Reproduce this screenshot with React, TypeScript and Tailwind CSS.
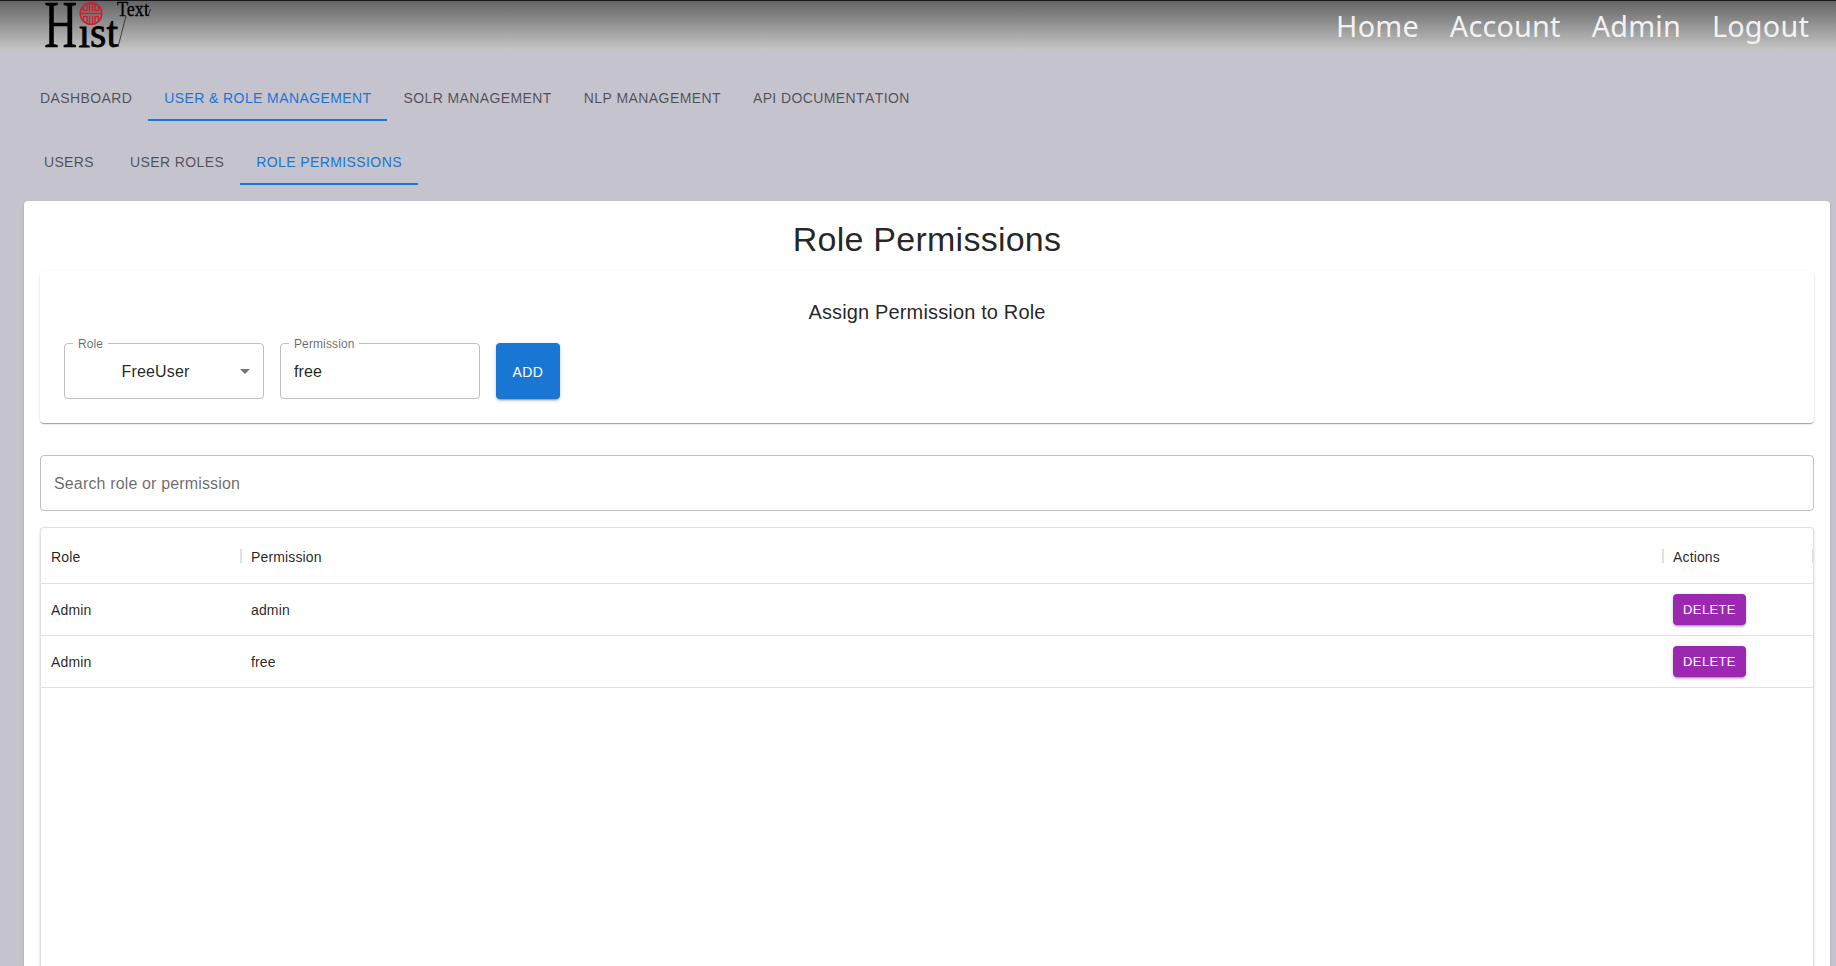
import React from "react";

const shadow2 =
  "shadow-[0px_3px_1px_-2px_rgba(0,0,0,0.2),0px_2px_2px_0px_rgba(0,0,0,0.14),0px_1px_5px_0px_rgba(0,0,0,0.12)]";
const shadow1 =
  "shadow-[0px_2px_1px_-1px_rgba(0,0,0,0.2),0px_1px_1px_0px_rgba(0,0,0,0.14),0px_1px_3px_0px_rgba(0,0,0,0.12)]";

function Logo() {
  return (
    <svg
      width="114"
      height="48"
      viewBox="0 0 114 48"
      className="block overflow-visible"
      fontFamily="'Liberation Serif', serif"
    >
      <g transform="translate(5 46) scale(0.67 1)">
        <text x="-1" y="0" fontSize="68" stroke="#000" strokeWidth="0.6">H</text>
      </g>
      <g transform="translate(38.5 46) scale(0.93 1)">
        <text x="0" y="0" fontSize="45" stroke="#000" strokeWidth="0.8">ıst</text>
      </g>
      <text x="77" y="15" fontSize="20" textLength="32" lengthAdjust="spacingAndGlyphs" stroke="#000" strokeWidth="0.3">
        Text
      </text>
      <path d="M86 15 78 46M110.500 8l-2 6" stroke="#222" strokeWidth="0.8" fill="none" />
      <g transform="translate(51 12.5)" fill="none" stroke="#c8202f" strokeWidth="1.5">
        <circle r="10.8" />
        <path d="M-1.500-11V-2M1.500-11V-2M-1.500 11V2M1.500 11V2M-11 0H11M-7.500-7.500V-3H-4V-9M7.500-7.500V-3H4V-9M-7.500 7.500V3H-4V9M7.500 7.500V3H4V9" />
      </g>
    </svg>
  );
}

function Tab({ label, active = false }: { label: string; active?: boolean }) {
  return (
    <button
      className={
        "flex h-12 min-w-[90px] items-center justify-center border-b-2 px-4 pt-1 text-sm leading-[18px] tracking-[0.02857em] uppercase [font-kerning:none] " +
        (active ? "border-[#1976d2] text-[#1976d2]" : "border-transparent text-black/60")
      }
    >
      {label}
    </button>
  );
}

function Outlined({ label, children }: { label: string; children: React.ReactNode }) {
  return (
    <div className="relative flex h-14 w-[200px] items-center rounded border border-black/25 px-[13px]">
      <span className="absolute -top-2 left-2 bg-white px-[5px] text-xs leading-[17px] tracking-[0.0094em] text-black/60">
        {label}
      </span>
      {children}
    </div>
  );
}

const rows = [
  { role: "Admin", permission: "admin" },
  { role: "Admin", permission: "free" },
];

export default function App() {
  return (
    <div className="flex h-[966px] flex-col overflow-hidden bg-[#c5c3ce] font-['Liberation_Sans',Arial,sans-serif] text-black/87">
      <header className="flex h-[49px] shrink-0 justify-between border-t border-[#1c1b1f] bg-linear-to-b from-[#666] to-[#c4c4c4] pl-10">
        <Logo />
        <nav className="flex gap-[31px] pr-[27px] font-['Noto_Sans',sans-serif] text-[28.8px] leading-[50px] tracking-[0.2px] text-[#f2f2f2]">
          <a>Home</a>
          <a>Account</a>
          <a>Admin</a>
          <a>Logout</a>
        </nav>
      </header>
      <main className="flex min-h-0 flex-1 flex-col pt-6 pr-1.5 pl-6">
        <div className="flex shrink-0">
          <Tab label="Dashboard" />
          <Tab label="User & Role Management" active />
          <Tab label="Solr Management" />
          <Tab label="NLP Management" />
          <Tab label="API Documentation" />
        </div>
        <div className="mt-4 flex shrink-0">
          <Tab label="Users" />
          <Tab label="User Roles" />
          <Tab label="Role Permissions" active />
        </div>
        <section className={"mt-4 flex min-h-0 flex-1 flex-col rounded-t bg-white px-4 pt-[17px] " + shadow1}>
          <h4 className="mb-[11px] text-center text-[34px] leading-[42px] tracking-[0.00735em]">Role Permissions</h4>
          <div className={"h-[152px] rounded px-6 pt-[25px] " + shadow1}>
            <h6 className="mb-[15px] text-center text-xl leading-8 tracking-[0.0075em]">Assign Permission to Role</h6>
            <div className="flex gap-4">
              <Outlined label="Role">
                <span className="flex-1 pt-0.5 text-center tracking-[0.0094em]">FreeUser</span>
                <svg width="24" height="24" viewBox="0 0 24 24" className="-mr-[7px]">
                  <path d="M7 10l5 5 5-5z" fill="#757575" />
                </svg>
              </Outlined>
              <Outlined label="Permission">
                <span className="pt-0.5 tracking-[0.0094em]">free</span>
              </Outlined>
              <button className={"h-14 w-16 rounded bg-[#1976d2] pt-0.5 text-sm tracking-[0.02857em] text-white " + shadow2}>
                ADD
              </button>
            </div>
          </div>
          <div className="mt-8 flex h-14 shrink-0 items-center rounded border border-black/25 px-[13px] pt-0.5 tracking-[0.0094em] text-black/60">
            Search role or permission
          </div>
          <div
            className={
              "mt-4 flex min-h-0 flex-1 flex-col rounded-t border border-b-0 border-[#e0e0e0] text-sm tracking-[0.01071em] " +
              shadow1
            }
          >
            <div className="flex h-14 shrink-0 items-center border-b border-[#e0e0e0]">
              <div className="w-[199px] pt-0.5 pl-2.5">Role</div>
              <div className="h-3.5 w-0.5 bg-[#e0e0e0]" />
              <div className="flex-1 pt-0.5 pl-[9px]">Permission</div>
              <div className="h-3.5 w-0.5 bg-[#e0e0e0]" />
              <div className="w-[148px] pt-0.5 pl-[9px]">Actions</div>
              <div className="h-3.5 w-px bg-[#e0e0e0]" />
            </div>
            {rows.map((r) => (
              <div key={r.permission} className="flex h-13 shrink-0 items-center border-b border-[#e0e0e0]">
                <div className="w-[200px] pl-2.5">{r.role}</div>
                <div className="flex-1 pl-2.5">{r.permission}</div>
                <div className="w-[150px] pl-2.5">
                  <button
                    className={
                      "block h-[31px] w-[73px] rounded bg-[#9c27b0] pt-px text-[13px] tracking-[0.02857em] text-white " +
                      shadow2
                    }
                  >
                    DELETE
                  </button>
                </div>
              </div>
            ))}
          </div>
        </section>
      </main>
    </div>
  );
}
